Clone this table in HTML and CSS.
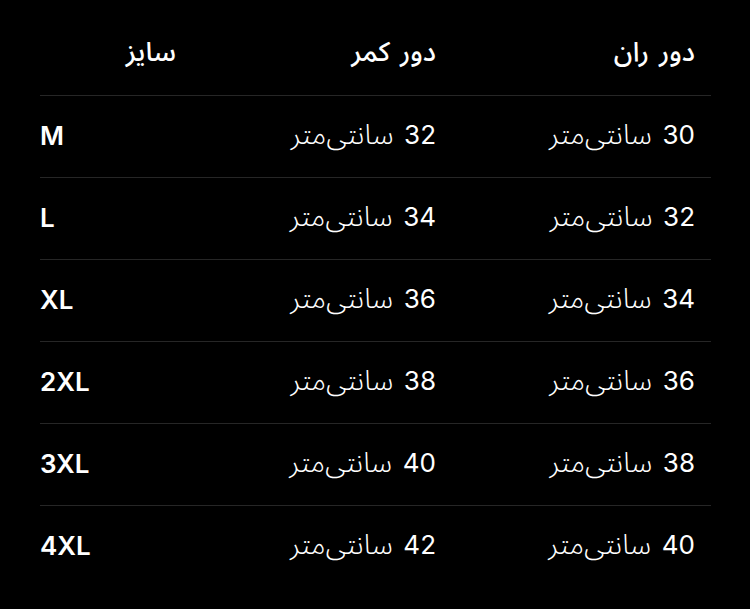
FILE: index.html
```html
<!DOCTYPE html>
<html lang="fa" dir="rtl">
<head>
<meta charset="utf-8">
<link rel="stylesheet" href="styles.css">
</head>
<body>
<div class="table">
  <div class="row head">
    <div class="cell">دور ران</div>
    <div class="cell">دور کمر</div>
    <div class="cell">سایز</div>
  </div>
  <div class="row">
    <div class="cell">30 <span class="unit">سانتی‌متر</span></div>
    <div class="cell">32 <span class="unit">سانتی‌متر</span></div>
    <div class="cell size">M</div>
  </div>
  <div class="row">
    <div class="cell">32 <span class="unit">سانتی‌متر</span></div>
    <div class="cell">34 <span class="unit">سانتی‌متر</span></div>
    <div class="cell size">L</div>
  </div>
  <div class="row">
    <div class="cell">34 <span class="unit">سانتی‌متر</span></div>
    <div class="cell">36 <span class="unit">سانتی‌متر</span></div>
    <div class="cell size">XL</div>
  </div>
  <div class="row">
    <div class="cell">36 <span class="unit">سانتی‌متر</span></div>
    <div class="cell">38 <span class="unit">سانتی‌متر</span></div>
    <div class="cell size">2XL</div>
  </div>
  <div class="row">
    <div class="cell">38 <span class="unit">سانتی‌متر</span></div>
    <div class="cell">40 <span class="unit">سانتی‌متر</span></div>
    <div class="cell size">3XL</div>
  </div>
  <div class="row last">
    <div class="cell">40 <span class="unit">سانتی‌متر</span></div>
    <div class="cell">42 <span class="unit">سانتی‌متر</span></div>
    <div class="cell size">4XL</div>
  </div>
</div>
</body>
</html>
```
FILE: styles.css
```css
html, body {
  margin: 0;
  padding: 0;
  background: #000;
  height: 100%;
}
body {
  color: #fff;
  font-family: Inter, "Noto Sans Arabic", "Noto Sans", "DejaVu Sans", sans-serif;
  font-size: 26px;
  font-weight: 400;
}
.table {
  width: 671px;
  margin: 13px 39px 0 40px;
}
.row {
  display: grid;
  grid-template-columns: 259px 260px 152px;
  height: 81px;
  border-bottom: 1px solid #262626;
  align-items: center;
}
.row.head {
  height: 82px;
  font-weight: 500;
  font-size: 27px;
}
.row.last {
  border-bottom: none;
}
.cell {
  padding: 0 16px 3px;
  text-align: right;
  white-space: nowrap;
  word-spacing: 3px;
}
.unit {
  font-size: 28px;
  font-weight: 300;
}
.cell.size {
  text-align: left;
  padding-left: 0;
  font-weight: 600;
  font-size: 26px;
}
```
